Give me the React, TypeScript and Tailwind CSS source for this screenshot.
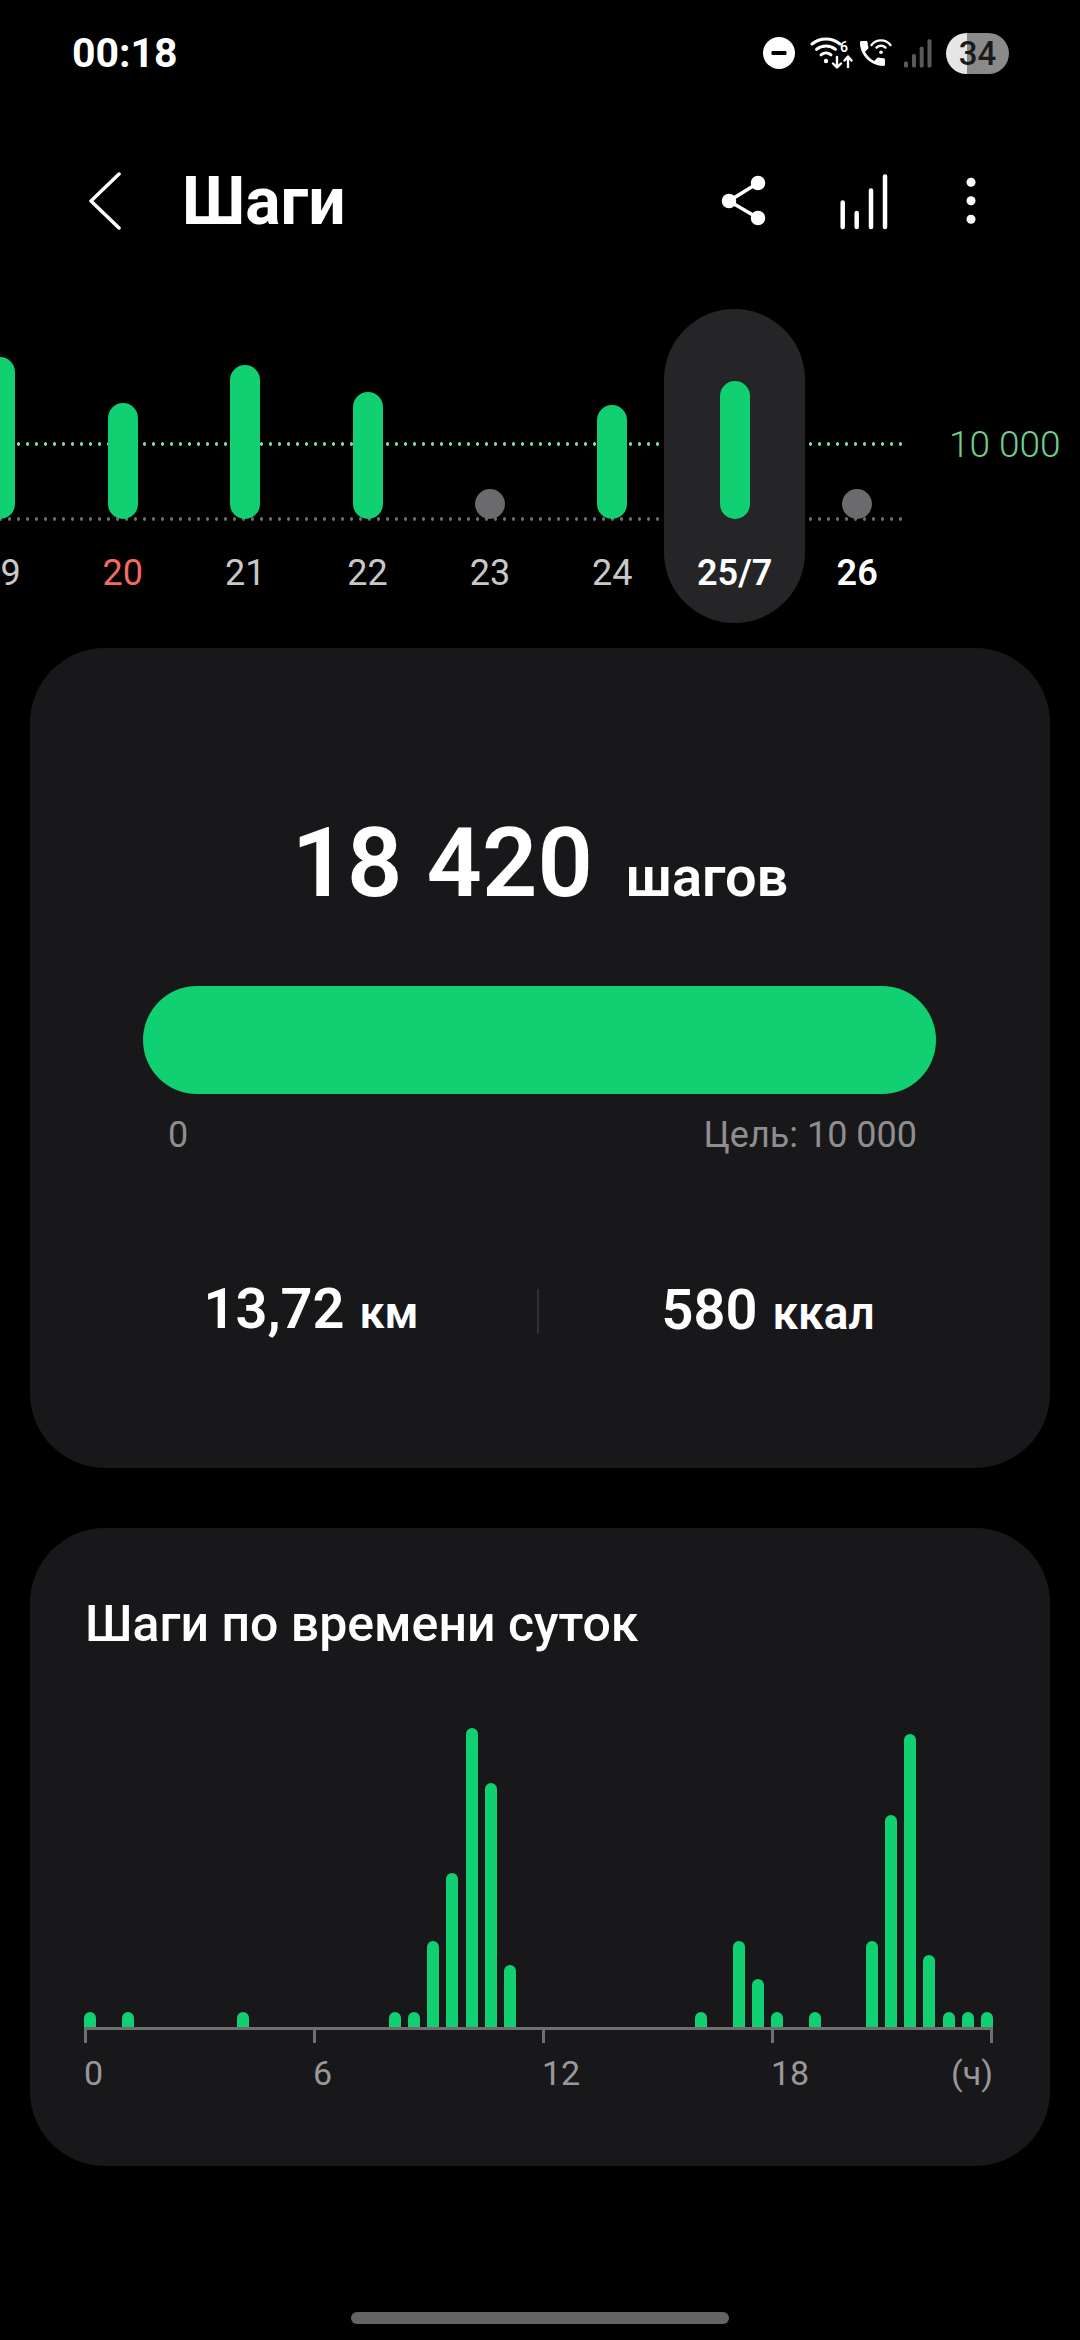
import React from "react";

// day columns of the week strip, h = bar height in px above the baseline
const days = [
  { label: "19", h: 162, color: "text-[#c8c8c8]" },
  { label: "20", h: 116, color: "text-[#f26a62]" },
  { label: "21", h: 154, color: "text-[#c8c8c8]" },
  { label: "22", h: 127, color: "text-[#c8c8c8]" },
  { label: "23", h: 0, color: "text-[#c8c8c8]" },
  { label: "24", h: 114, color: "text-[#c8c8c8]" },
  { label: "25/7", h: 138, color: "text-white font-semibold", selected: true },
  { label: "26", h: 0, color: "text-white font-semibold" },
];

// half-hour slot -> bar height
const slots: Record<number, number> = {
  0: 15, 2: 15, 8: 15, 16: 15, 17: 15, 18: 86, 19: 154, 20: 299, 21: 244, 22: 62,
  32: 15, 34: 86, 35: 48, 36: 15, 38: 15, 41: 86, 42: 212, 43: 293, 44: 72, 45: 15, 46: 15, 47: 15,
};

const StatusIcons = () => (
  <div className="flex items-center">
    <svg width="32" height="32" viewBox="0 0 32 32">
      <circle cx="16" cy="16" r="16" fill="#fff" />
      <rect x="8.5" y="14" width="15" height="4" rx="1" fill="#000" />
    </svg>
    <svg className="ml-[15px]" width="44" height="33" viewBox="0 0 44 33" fill="none" stroke="#fff" strokeWidth="3" strokeLinecap="round" strokeLinejoin="round">
      <path d="M2 7A22 22 0 0 1 30 7" />
      <path d="M6.5 12.4A15 15 0 0 1 25.5 12.4" />
      <path d="M11 17.8A8 8 0 0 1 21 17.8" />
      <circle cx="16" cy="24" r="2.2" fill="#fff" stroke="none" />
      <text x="30" y="15" fontSize="14" fontWeight="600" fill="#fff" stroke="none" fontFamily="Roboto, sans-serif">6</text>
      <path d="M27 20V30M23 26.5L27 30.5L31 26.5" strokeWidth="2.4" />
      <path d="M38 30V20M34.500 23.500L38 19.500L41.500 23.500" strokeWidth="2.4" />
    </svg>
    <svg className="ml-[5px]" width="34" height="28" viewBox="0 0 34 28" fill="none" stroke="#fff" strokeWidth="2.4" strokeLinecap="round">
      <path transform="translate(-3.2,-2.2) scale(1.39)" fill="#fff" stroke="none" d="M6.62 10.79c1.44 2.83 3.76 5.14 6.59 6.59l2.2-2.2c.27-.27.67-.36 1.02-.24 1.12.37 2.33.57 3.57.57.55 0 1 .45 1 1V20c0 .55-.45 1-1 1-9.39 0-17-7.61-17-17 0-.55.45-1 1-1h3.5c.55 0 1 .45 1 1 0 1.25.2 2.45.57 3.57.11.35.03.74-.25 1.02l-2.2 2.2z" />
      <path d="M12.500 6A12 12 0 0 1 31.500 6" />
      <path d="M17.500 8.600A6.500 6.500 0 0 1 26.500 8.600" />
      <circle cx="22" cy="13.300" r="1.800" fill="#fff" stroke="none" />
    </svg>
    <svg className="ml-[11px]" width="28" height="29" viewBox="0 0 28 29" fill="#5a5a5a">
      <rect x="0" y="22.500" width="4" height="6" rx="1.500" />
      <rect x="8" y="15" width="4" height="13.500" rx="1.500" />
      <rect x="15.700" y="7.700" width="4" height="20.800" rx="1.500" />
      <rect x="23.500" y="0.300" width="4" height="28.200" rx="1.500" />
    </svg>
    <div className="ml-[14px] w-[63px] h-[41px] rounded-full bg-[linear-gradient(90deg,#e6e6e6_34%,#8a8a8a_34%)] flex items-center justify-center text-[33px] leading-none font-medium text-[#1a1a1a]">
      34
    </div>
  </div>
);

const HeaderIcons = () => (
  <div className="ml-auto mr-[98px] flex items-center">
    <svg width="46" height="54" viewBox="0 0 46 54" fill="#fff" stroke="#fff" strokeWidth="3.500">
      <path d="M38 9L9 27L38 44" fill="none" />
      <circle cx="38" cy="9" r="5.500" />
      <circle cx="9" cy="27" r="5.500" />
      <circle cx="38" cy="44" r="5.500" />
    </svg>
    <svg className="ml-[72px]" width="52" height="58" viewBox="0 0 52 58" fill="none" stroke="#fff" strokeWidth="4.500" strokeLinecap="round">
      <path d="M4.700 30.500V55M18.700 41V55M33 18.500V55M47 4.500V55" />
    </svg>
    <svg className="ml-[70px]" width="22" height="54" viewBox="0 0 22 54" fill="#fff">
      <circle cx="11" cy="8.300" r="4.500" />
      <circle cx="11" cy="26.700" r="4.500" />
      <circle cx="11" cy="45.300" r="4.500" />
    </svg>
  </div>
);

const WeekStrip = () => (
  <div className="relative mt-[13px] h-[314px] overflow-hidden">
    <div className="absolute left-[-4.500px] top-[133px] w-[909px] h-[4px] bg-[radial-gradient(circle,#7fd6a0_1.500px,transparent_2px)] bg-[length:9px_4px]" />
    <div className="absolute left-[-4.500px] top-[208px] w-[909px] h-[4px] bg-[radial-gradient(circle,#6a6a6a_1.500px,transparent_2px)] bg-[length:9px_4px]" />
    <div className="absolute left-[949px] top-[115px] text-[37px] leading-[42px] font-light text-[#6fce8e]">10 000</div>
    <div className="flex ml-[-60.800px]">
      {days.map((d) => (
        <div key={d.label} className="relative w-[122.400px] shrink-0 flex flex-col items-center">
          {d.selected && (
            <div className="absolute left-[-9.300px] top-0 w-[141px] h-[314px] rounded-full bg-[#252527]" />
          )}
          <div className="relative h-[210px] flex items-end">
            {d.h > 0 ? (
              <div className="w-[30px] rounded-full bg-[#11d071]" style={{ height: d.h }} />
            ) : (
              <div className="w-[30px] h-[30px] rounded-full bg-[#6b6b6d]" />
            )}
          </div>
          <div className={`relative mt-[34px] h-[40px] text-[36px] leading-[40px] ${d.color}`}>{d.label}</div>
        </div>
      ))}
    </div>
  </div>
);

const StepsCard = () => (
  <div className="mx-[30px] mt-[25px] h-[820px] rounded-[75px] bg-[#18181a] pt-[160px]">
    <div className="flex items-baseline justify-center text-white h-[110px] leading-[110px] font-semibold">
      <span className="text-[97px]">18 420</span>
      <span className="ml-[33px] text-[56px]">шагов</span>
    </div>
    <div className="mx-[113px] mt-[68px] w-[793px] h-[108px] rounded-full bg-[#11d071]" />
    <div className="mx-[113px] mt-[21px] w-[793px] pl-[25px] pr-[19px] flex justify-between text-[36px] leading-[40px] text-[#8e8e90]">
      <span>0</span>
      <span>Цель: 10 000</span>
    </div>
    <div className="mt-[124px] ml-[55px] flex items-center text-white font-semibold">
      <div className="w-[452px] flex items-baseline justify-center">
        <span className="text-[56px] leading-[60px]">13,72</span>
        <span className="ml-[15px] text-[45px] leading-[60px]">км</span>
      </div>
      <div className="w-[2px] h-[45px] bg-[#303032]" />
      <div className="w-[458px] flex items-baseline justify-center">
        <span className="text-[56px] leading-[60px]">580</span>
        <span className="ml-[15px] text-[46px] leading-[60px]">ккал</span>
      </div>
    </div>
  </div>
);

const HourlyCard = () => (
  <div className="mx-[30px] mt-[60px] h-[638px] rounded-[75px] bg-[#18181a] pt-[66px]">
    <div className="pl-[55px] text-[50px] leading-[60px] font-medium text-white">Шаги по времени суток</div>
    <div className="ml-[54px] w-[909px]">
      <div className="mt-[73px] h-[300px] flex items-end justify-between">
        {Array.from({ length: 48 }, (_, i) => (
          <div key={i} className="w-[12px] rounded-t-full bg-[#11d071]" style={{ height: slots[i] ?? 0 }} />
        ))}
      </div>
      <div className="h-[3px] bg-[#6f6f71]" />
      <div className="flex h-[13px]">
        <div className="w-[229px] border-l-[3px] border-[#6f6f71]" />
        <div className="w-[229px] border-l-[3px] border-[#6f6f71]" />
        <div className="w-[229px] border-l-[3px] border-[#6f6f71]" />
        <div className="flex-1 border-x-[3px] border-[#6f6f71]" />
      </div>
      <div className="mt-[10px] flex text-[34px] leading-[40px] text-[#98989a]">
        <div className="w-[229px]">0</div>
        <div className="w-[229px]">6</div>
        <div className="w-[229px]">12</div>
        <div className="flex-1 flex justify-between">
          <span>18</span>
          <span>(ч)</span>
        </div>
      </div>
    </div>
  </div>
);

export default function App() {
  return (
    <div className="relative w-[1080px] h-[2340px] overflow-hidden bg-black font-['Roboto',sans-serif]">
      <div className="h-[106px] pl-[72px] pr-[71px] flex items-center justify-between">
        <span className="pt-[2px] text-[41px] font-bold text-white">00:18</span>
        <StatusIcons />
      </div>

      <div className="h-[190px] pl-[88px] flex items-center">
        <svg width="34" height="58" viewBox="0 0 34 58" fill="none" stroke="#fff" strokeWidth="3.500" strokeLinecap="round" strokeLinejoin="round">
          <path d="M31 2L3 29L31 56" />
        </svg>
        <span className="ml-[60px] text-[66px] font-bold text-white">Шаги</span>
        <HeaderIcons />
      </div>

      <WeekStrip />
      <StepsCard />
      <HourlyCard />

      {/* gesture bar */}
      <div className="absolute left-[351px] top-[2312px] w-[378px] h-[12px] rounded-full bg-[#646464]" />
    </div>
  );
}
